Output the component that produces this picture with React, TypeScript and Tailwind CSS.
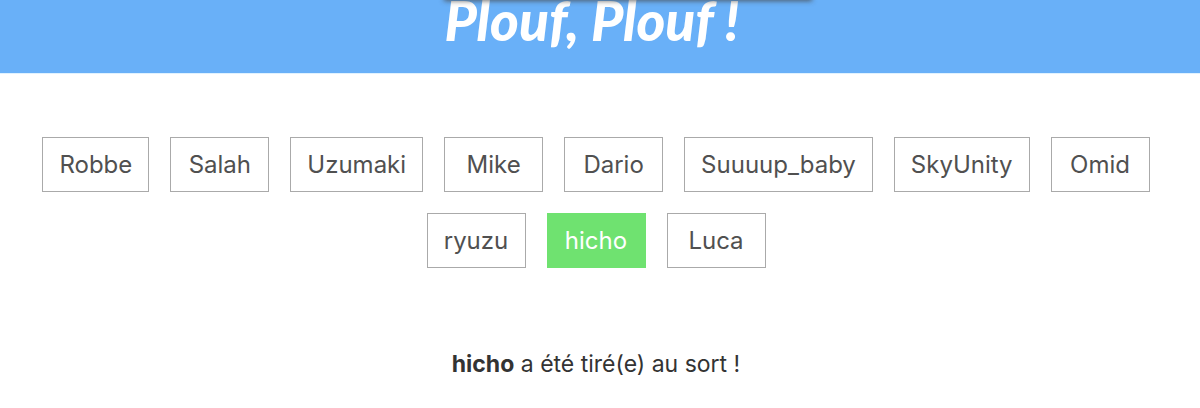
const names = [
  'Robbe',
  'Salah',
  'Uzumaki',
  'Mike',
  'Dario',
  'Suuuup_baby',
  'SkyUnity',
  'Omid',
  'ryuzu',
  'hicho',
  'Luca',
];

const Header = () => (
  <header className="relative border-b border-[#e0f2ff] bg-[#69b0f8] pr-4 pb-8 text-center">
    <div className="absolute -top-2 left-1/2 h-2 w-[366px] -translate-x-[155px] shadow-[0_0_5px_1px_rgba(70,70,70,0.8)]" />
    <h1 className="font-['Lato',cursive] text-[55px] leading-[41px] font-black text-white italic">
      Plouf, Plouf !
    </h1>
  </header>
);

const NameList = ({ picked }: { picked: string }) => (
  <ul className="flex flex-wrap justify-center gap-[21px]">
    {names.map((name) => (
      <li
        key={name}
        className={`min-w-[99px] border px-4 py-2 text-center text-2xl leading-[37px] ${
          name === picked
            ? 'border-[#6fe270] bg-[#6fe270] text-white'
            : 'border-[#aaaaaa] bg-white text-[#505050]'
        }`}
      >
        {name}
      </li>
    ))}
  </ul>
);

export default function App() {
  const picked = 'hicho';

  return (
    <div className="min-h-screen bg-white font-['Inter','Liberation_Sans',sans-serif]">
      <Header />
      <main className="pt-[63px] pr-6 pl-4">
        <NameList picked={picked} />
        <p className="mt-20 text-center text-[23px] leading-8 text-[#333333]">
          <strong className="font-bold">{picked}</strong> a été tiré(e) au sort !
        </p>
      </main>
    </div>
  );
}
